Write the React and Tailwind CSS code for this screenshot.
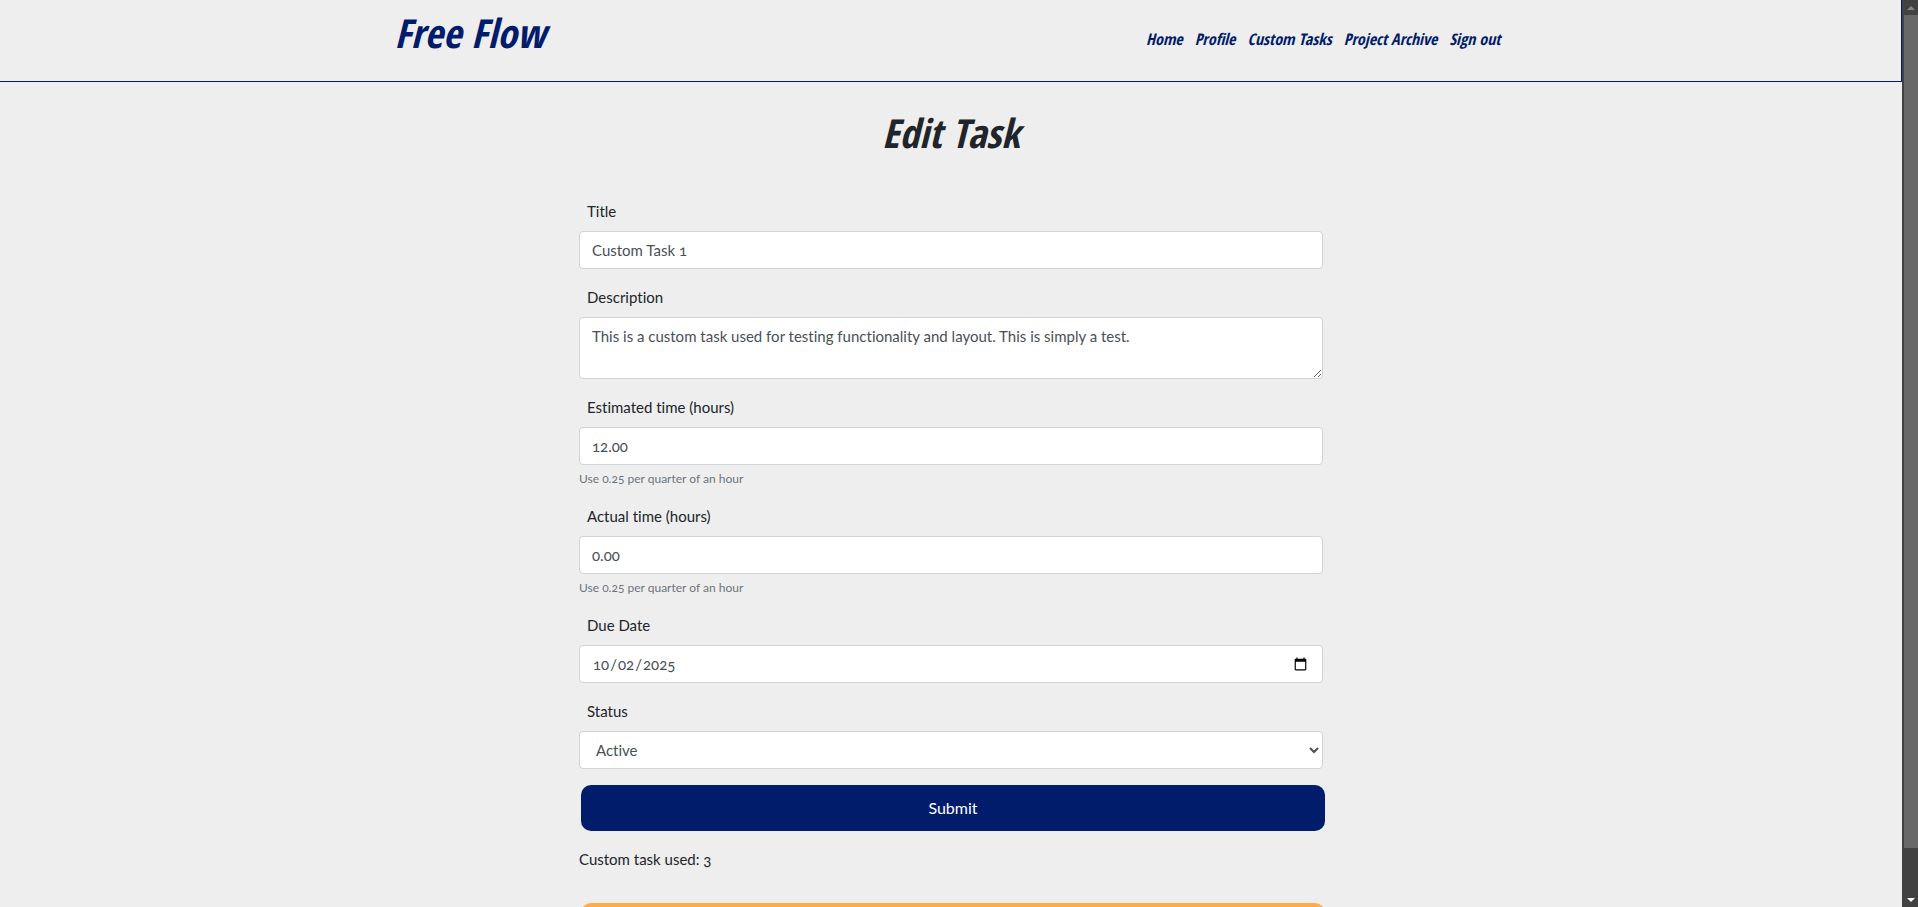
import { useState } from 'react';

const control =
  'block w-full rounded border border-[#ced4da] bg-white px-3 py-1.5 text-[15px] leading-6 text-[#495057]';

const links = ['Home', 'Profile', 'Custom Tasks', 'Project Archive', 'Sign out'];

function Field({ id, label, help, children }) {
  return (
    <div className="mb-4">
      <label htmlFor={id} className="mb-2 block pl-2 leading-6">
        {label}
      </label>
      {children}
      {help && (
        <small id={id + '-help'} className="mt-1 block text-xs leading-[19px] text-[#6c757d]">
          {help}
        </small>
      )}
    </div>
  );
}

function ScrollRail() {
  return (
    <div aria-hidden="true" className="flex w-4 shrink-0 flex-col bg-[#424242] pl-0.5">
      <div className="flex h-[15px] items-center justify-center">
        <svg width="8" height="4" viewBox="0 0 8 4" fill="#868686">
          <path d="M4 0 8 4H0Z" />
        </svg>
      </div>
      <div className="grow-[833] bg-[#686868]" />
      <div className="grow-[44]" />
      <div className="flex h-[15px] items-center justify-center">
        <svg width="8" height="4" viewBox="0 0 8 4" fill="#fff">
          <path d="M0 0H8L4 4Z" />
        </svg>
      </div>
    </div>
  );
}

export default function App() {
  const [task, setTask] = useState({
    title: 'Custom Task 1',
    description:
      'This is a custom task used for testing functionality and layout. This is simply a test.',
    estimated: '12.00',
    actual: '0.00',
    due: '2025-10-02',
    status: 'Active',
  });
  const bind = (key) => ({
    id: key,
    value: task[key],
    onChange: (e) => setTask({ ...task, [key]: e.target.value }),
  });

  return (
    <div className="flex h-screen bg-[#eee] font-['Lato',sans-serif] text-[15px] text-[#212529] [font-variant-ligatures:none] [font-feature-settings:'onum']">
      <div className="min-w-0 flex-1 overflow-hidden">
        <header className="border-r border-b border-[#001c6b] font-['Open_Sans_Condensed','Roboto_Condensed','Lato',sans-serif] font-bold text-[#001c6b] italic">
          <div className="mx-auto flex h-[81px] max-w-[1140px] items-start justify-between pr-5 pl-3.5">
            <a href="#home" className="pt-2 text-[40px] leading-[50px]">
              Free Flow
            </a>
            <nav className="flex gap-3 pt-[27px] text-base leading-6">
              {links.map((name) => (
                <a key={name} href={'#' + name.toLowerCase().replace(' ', '-')}>
                  {name}
                </a>
              ))}
            </nav>
          </div>
        </header>

        <main className="mx-auto max-w-[744px]">
          <h1 className="pt-6 pb-10 text-center font-['Open_Sans_Condensed','Roboto_Condensed','Lato',sans-serif] text-[40px] leading-[53px] font-bold italic">
            Edit Task
          </h1>

          <form onSubmit={(e) => e.preventDefault()}>
            <Field id="title" label="Title">
              <input type="text" className={control} {...bind('title')} />
            </Field>
            <Field id="description" label="Description">
              <textarea rows={2} className={control + ' h-[62px]'} {...bind('description')} />
            </Field>
            <Field id="estimated" label="Estimated time (hours)" help="Use 0.25 per quarter of an hour">
              <input type="number" step="0.25" className={control} {...bind('estimated')} />
            </Field>
            <Field id="actual" label="Actual time (hours)" help="Use 0.25 per quarter of an hour">
              <input type="number" step="0.25" className={control} {...bind('actual')} />
            </Field>
            <Field id="due" label="Due Date">
              <input type="date" className={control + ' h-[38px]'} {...bind('due')} />
            </Field>
            <Field id="status" label="Status">
              <select className={control + ' h-[38px]'} {...bind('status')}>
                <option>Active</option>
                <option>Completed</option>
              </select>
            </Field>
            <button
              type="submit"
              className="ml-0.5 h-[46px] w-full rounded-[10px] bg-[#001c6b] text-base text-white"
            >
              Submit
            </button>
          </form>

          <p className="mt-4 mb-8 leading-6">Custom task used: 3</p>

          <button
            type="button"
            aria-label="Delete task"
            className="ml-0.5 h-[46px] w-full rounded-[10px] bg-[#ffab4a]"
          />
        </main>
      </div>
      <ScrollRail />
    </div>
  );
}
